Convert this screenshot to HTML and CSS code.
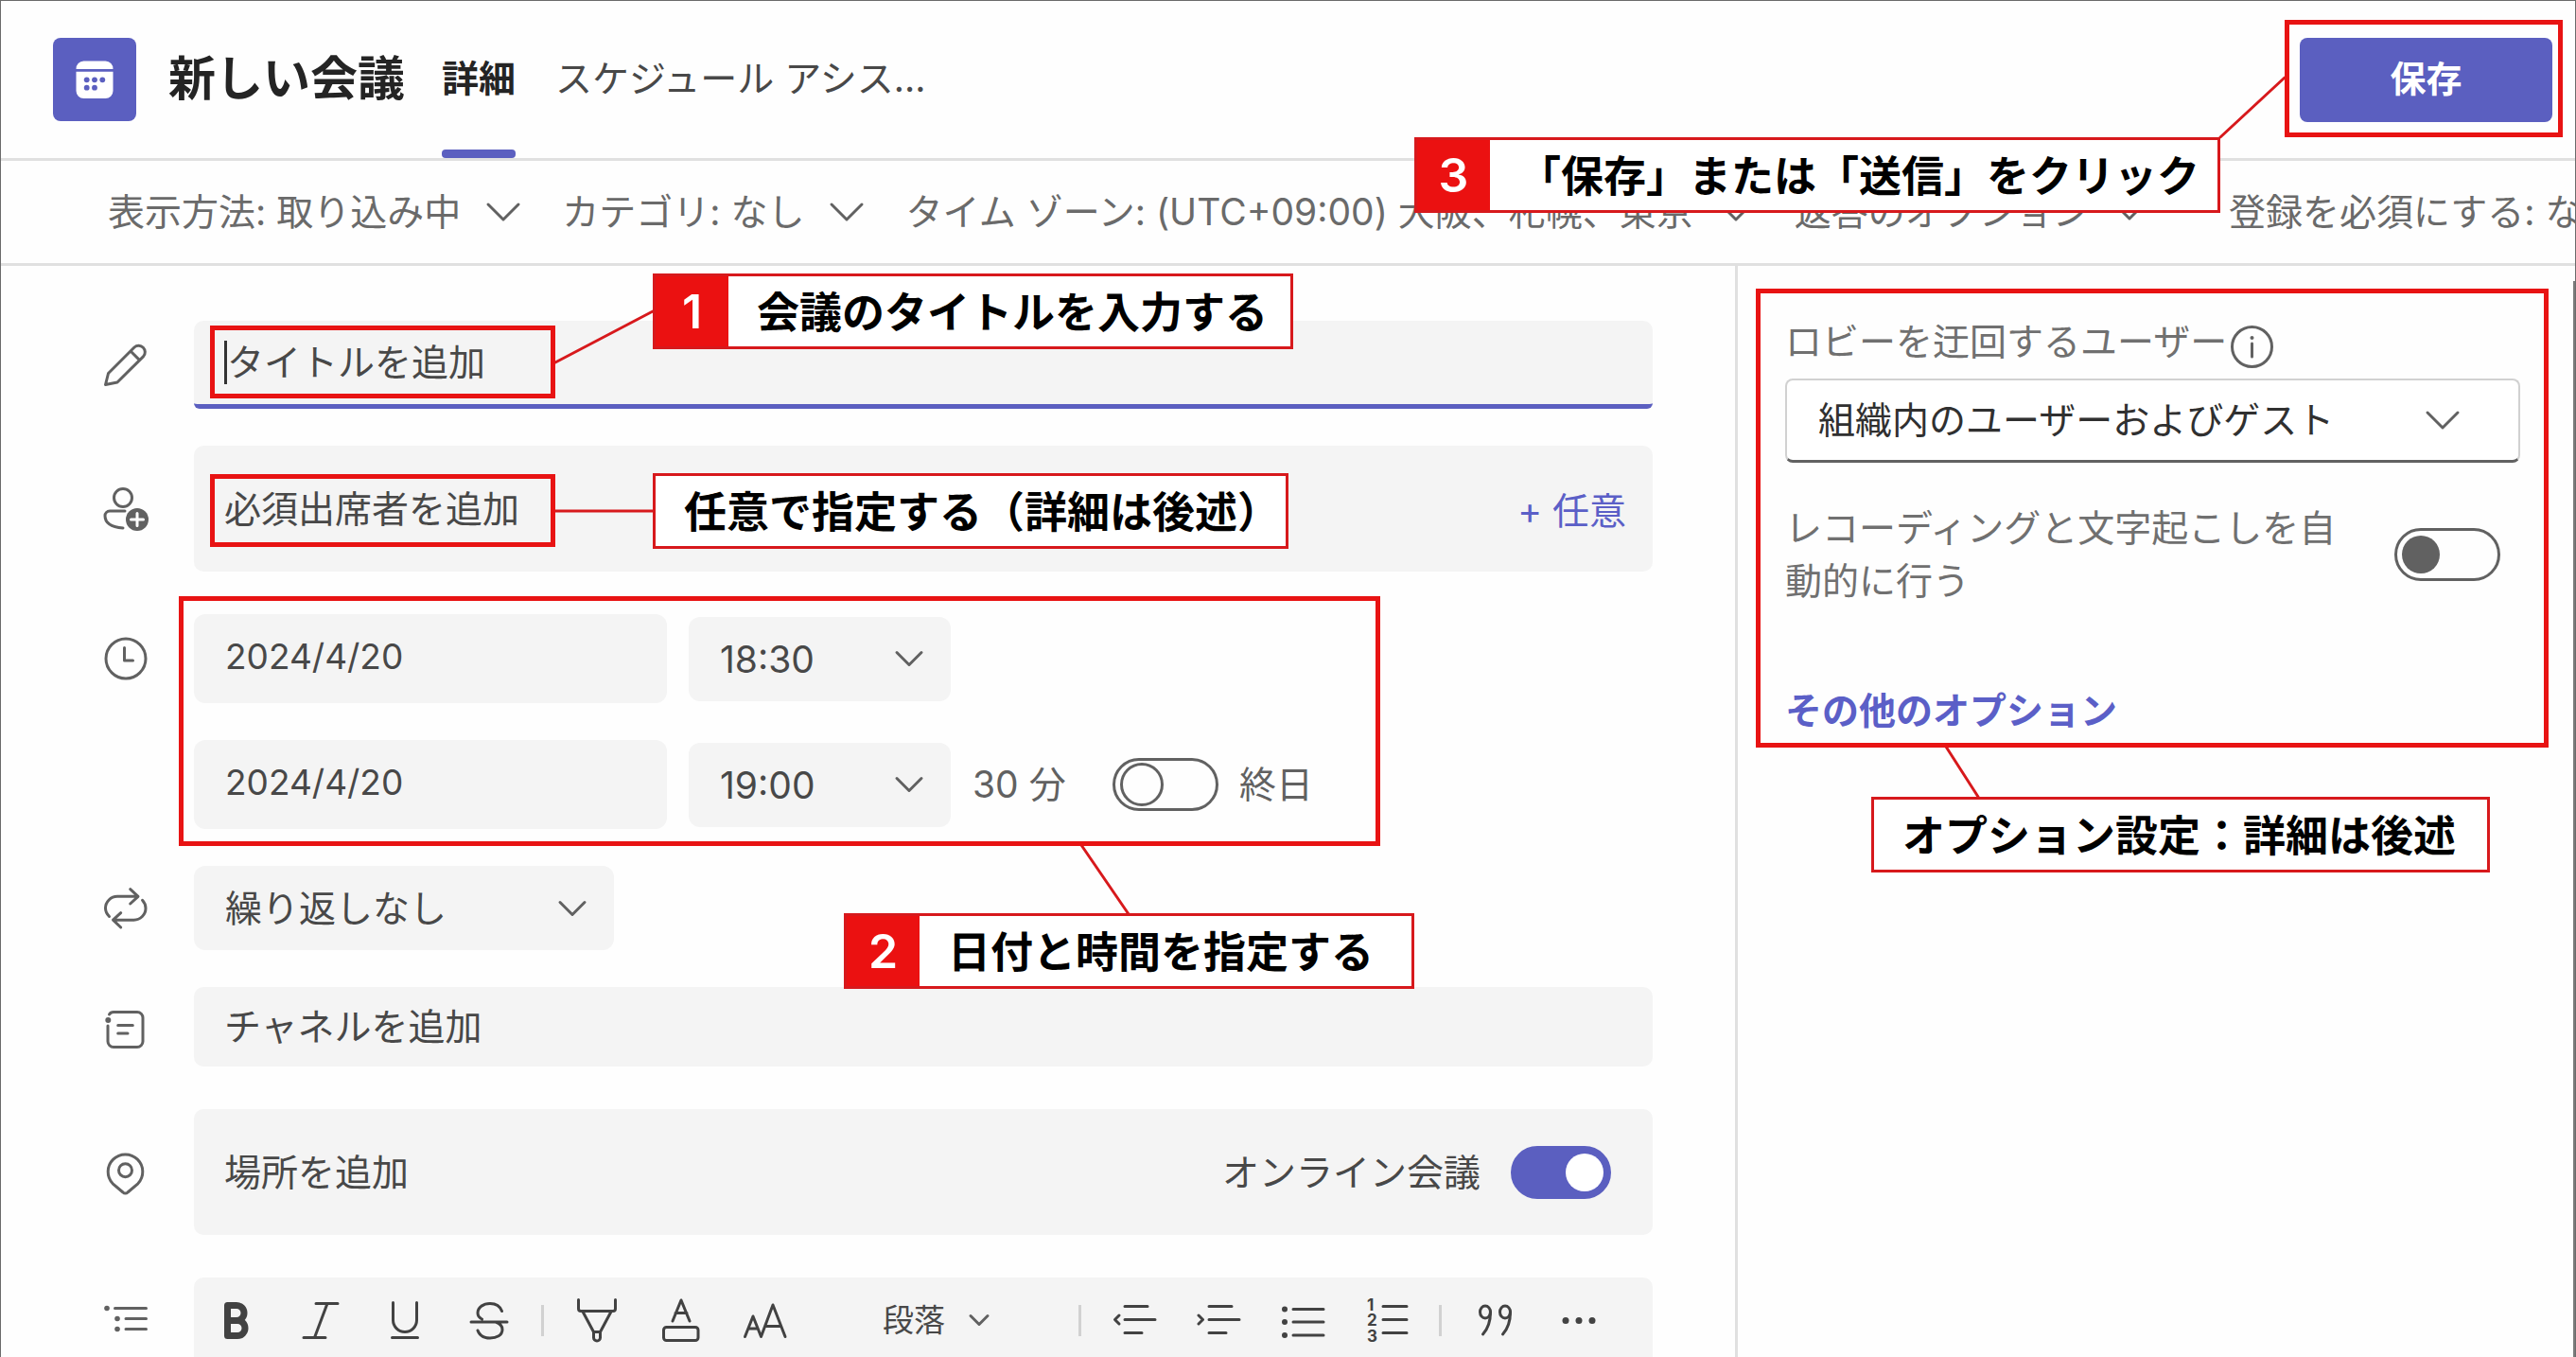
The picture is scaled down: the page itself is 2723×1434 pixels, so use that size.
FILE: index.html
```html
<!DOCTYPE html>
<html lang="ja">
<head>
    <meta charset="UTF-8">
    <meta name="viewport" content="width=device-width, initial-scale=1.0">
    <title>新しい会議</title>
    <link rel="stylesheet" href="styles.css">
</head>
<body>

    <header class="header">
        <svg class="logo" viewBox="0 0 88 88">
            <rect width="88" height="88" rx="8" fill="#5b5fc0"/>
            <path d="M24.500 33a8 8 0 0 1 8-8.500h23a8 8 0 0 1 8 8.500zM24.500 35.800h39V56a8 8 0 0 1-8 8h-23a8 8 0 0 1-8-8z" fill="#fff"/>
            <g fill="#5b5fc0">
                <circle cx="35.700" cy="44.300" r="2.900"/><circle cx="44" cy="44.300" r="2.900"/><circle cx="52.300" cy="44.300" r="2.900"/>
                <circle cx="35.700" cy="52.700" r="2.900"/><circle cx="44" cy="52.700" r="2.900"/>
            </g>
        </svg>
        <h1>新しい会議</h1>
        <nav class="tabs">
            <a href="#" class="tab active">詳細</a>
            <a href="#" class="tab">スケジュール アシス...</a>
        </nav>
        <button class="save">保存</button>
    </header>

    <div class="options-bar">
        <button>表示方法: 取り込み中 <svg class="chevron wide" viewBox="0 0 36 20"><path d="M2 2l16 16L34 2"/></svg></button>
        <button>カテゴリ: なし <svg class="chevron wide" viewBox="0 0 36 20"><path d="M2 2l16 16L34 2"/></svg></button>
        <button>タイム ゾーン: (UTC+09:00) 大阪、札幌、東京 <svg class="chevron wide" viewBox="0 0 36 20"><path d="M2 2l16 16L34 2"/></svg></button>
        <button>返答のオプション <svg class="chevron" viewBox="0 0 30 17"><path d="M2 2l13 13L28 2"/></svg></button>
        <button class="register">登録を必須にする: なし</button>
    </div>

    <main class="content">
        <form class="form">
            <!-- タイトル -->
            <div class="row">
                <svg class="icon" viewBox="0 0 48 48"><path d="M2.500 44.500L5.500 32.500 33 5a6.800 6.800 0 0 1 9.600 9.600L15 42zM29 9l9.600 9.600"/></svg>
                <div class="field title-field">
                    <span class="caret"></span>
                    <input type="text" aria-label="タイトル" placeholder="タイトルを追加">
                </div>
            </div>

            <!-- 出席者 -->
            <div class="row">
                <svg class="icon" viewBox="0 0 48 48">
                    <circle cx="21" cy="12" r="9.500"/>
                    <path d="M23 26H7a5 5 0 0 0-5 5c0 7 6 12 19 13"/>
                    <circle cx="36" cy="35" r="12" class="solid"/>
                    <path d="M36 28.500v13M29.500 35h13" class="plus"/>
                </svg>
                <div class="field tall people">
                    <input type="text" aria-label="必須出席者" placeholder="必須出席者を追加">
                    <button type="button" class="optional">+ 任意</button>
                </div>
            </div>

            <!-- 日時 -->
            <div class="row spaced">
                <svg class="icon" viewBox="0 0 48 48"><circle cx="24" cy="24" r="21"/><path d="M22.500 12.500V26h9"/></svg>
                <div class="date-line">
                    <input type="text" class="date" aria-label="開始日" value="2024/4/20">
                    <div class="select time">
                        <select aria-label="開始時刻"><option>18:30</option></select>
                        <svg class="chevron" viewBox="0 0 30 17"><path d="M2 2l13 13L28 2"/></svg>
                    </div>
                </div>
            </div>
            <div class="row">
                <span class="icon"></span>
                <div class="date-line">
                    <input type="text" class="date" aria-label="終了日" value="2024/4/20">
                    <div class="select time">
                        <select aria-label="終了時刻"><option>19:00</option></select>
                        <svg class="chevron" viewBox="0 0 30 17"><path d="M2 2l13 13L28 2"/></svg>
                    </div>
                    <span class="duration">30 分</span>
                    <input type="checkbox" class="toggle hollow" id="allday">
                    <label for="allday">終日</label>
                </div>
            </div>

            <!-- 繰り返し -->
            <div class="row">
                <svg class="icon" viewBox="0 0 48 48"><path d="M6.500 32.500C3.500 29.500 2.500 27 2.500 23.800A12.500 12.500 0 0 1 15 11.300h21M28.700 3.700l8.300 7.600-8.300 7.700M41.500 15.300C44 18 45 20.500 45 23.700a12.500 12.500 0 0 1-12.500 12.500H11M18.700 28.700L10.500 36.200l8.200 7.800"/></svg>
                <div class="select repeat">
                    <select aria-label="繰り返し"><option>繰り返しなし</option></select>
                    <svg class="chevron" viewBox="0 0 30 17"><path d="M2 2l13 13L28 2"/></svg>
                </div>
            </div>

            <!-- チャネル -->
            <div class="row">
                <svg class="icon" viewBox="0 0 48 48">
                    <path d="M6.500 11c1-1.700 2.500-2.500 4.500-2.500h25a6 6 0 0 1 6 6v25a6 6 0 0 1-6 6H11a6 6 0 0 1-6-6V23M15.700 22.500h15.600M15.700 31H26"/>
                    <circle cx="5.300" cy="17" r="3" class="solid"/>
                </svg>
                <div class="field channel">
                    <input type="text" aria-label="チャネル" placeholder="チャネルを追加">
                </div>
            </div>

            <!-- 場所 -->
            <div class="row spaced">
                <svg class="icon" viewBox="0 0 48 48"><path d="M10.200 35.800a18.300 18.300 0 1 1 26.600 0L26 45a3.500 3.500 0 0 1-5 0z"/><circle cx="23.500" cy="21.700" r="7"/></svg>
                <div class="field tall">
                    <input type="text" aria-label="場所" placeholder="場所を追加">
                    <label for="online">オンライン会議</label>
                    <input type="checkbox" class="toggle on" id="online" checked>
                </div>
            </div>

            <!-- 本文エディター -->
            <div class="row spaced editor-row">
                <svg class="icon" viewBox="0 0 48 48">
                    <path d="M12.500 12.500h33M24 23.500h21.500M24 34.500h21.500"/>
                    <g class="solid"><circle cx="4" cy="12.500" r="2.800"/><circle cx="15" cy="23.500" r="2.800"/><circle cx="15" cy="34.500" r="2.800"/></g>
                </svg>
                <div class="editor">
                    <div class="editor-tools">
                        <button type="button" aria-label="太字"><svg viewBox="0 0 48 48"><path d="M14.500 8.500h9.500a8 8 0 0 1 0 16h-9.500zM14.500 24.500H25a8 8 0 0 1 0 16H14.500z" stroke-width="7"/></svg></button>
                        <button type="button" aria-label="斜体"><svg viewBox="0 0 48 48"><path d="M19 6.500h23M6 42.500h23M31 6.500L17.500 42.500"/></svg></button>
                        <button type="button" aria-label="下線"><svg viewBox="0 0 48 48"><path d="M11.500 5.500V24a12.500 12.500 0 0 0 25 0V5.500M10.500 42.500h27"/></svg></button>
                        <button type="button" aria-label="取り消し線"><svg viewBox="0 0 48 48"><path d="M37.500 14.500c-2-5.500-7-8-12.500-8-7 0-13 4-13 10 0 3 1.500 5 4.500 6.500M5 26h38M31 26c4.500 1.500 7 4 7 8 0 6-6 9-13 9-6 0-11-2.500-13-8"/></svg></button>
                        <span class="divider"></span>
                        <button type="button" aria-label="蛍光ペン"><svg viewBox="0 0 48 48"><path d="M4.500 2.500v9.500a2.500 2.500 0 0 0 2.500 2.500h34a2.500 2.500 0 0 0 2.500-2.500V2.500M9 15l11.500 21.500h7L39 15M20.500 37v5.500a3.500 3.500 0 0 0 7 0V37"/></svg></button>
                        <button type="button" aria-label="文字の色"><svg viewBox="0 0 48 48"><path d="M15 25l9-22 9 22M18 16.500h12"/><rect x="5.500" y="31.500" width="36.500" height="14" rx="3"/></svg></button>
                        <button type="button" aria-label="文字サイズ"><svg viewBox="0 0 48 48"><path d="M2.500 41.500L11 20l8.500 21.500L32 8l13 33.500M6.500 33h9.500M23.500 30.500h17"/></svg></button>
                        <div class="select paragraph">
                            <select aria-label="段落"><option>段落</option></select>
                            <svg class="chevron small" viewBox="0 0 22 13"><path d="M2 2l9 9 9-9"/></svg>
                        </div>
                        <span class="divider"></span>
                        <button type="button" aria-label="インデント解除"><svg viewBox="0 0 48 48"><path d="M14 9.500h24M14 23.500h32M14 37.500h18M8 19l-4.500 4.500L8 28"/></svg></button>
                        <button type="button" aria-label="インデント"><svg viewBox="0 0 48 48"><path d="M14 9.500h24M14 23.500h32M14 37.500h18M3 19l4.500 4.500L3 28"/></svg></button>
                        <button type="button" aria-label="箇条書き"><svg viewBox="0 0 48 48"><path d="M14 12.500h32M14 26h32M14 40h32"/><g class="solid"><circle cx="5" cy="12.500" r="3"/><circle cx="5" cy="26" r="3"/><circle cx="5" cy="40" r="3"/></g></svg></button>
                        <button type="button" aria-label="段落番号"><svg viewBox="0 0 48 48"><path d="M20 9.500h25M20 23.500h25M20 37.500h25"/><g class="numbers"><text x="3" y="14">1</text><text x="3" y="30">2</text><text x="3" y="47">3</text></g></svg></button>
                        <span class="divider"></span>
                        <button type="button" aria-label="引用"><svg viewBox="0 0 48 48"><ellipse cx="14" cy="15.500" rx="5.500" ry="6.500"/><path d="M19.500 15.500C19.500 26 17 33 11.500 39"/><ellipse cx="35" cy="15.500" rx="5.500" ry="6.500"/><path d="M40.500 15.500C40.500 26 38 33 32.500 39"/></svg></button>
                        <button type="button" aria-label="その他"><svg viewBox="0 0 48 48"><g class="solid"><circle cx="10" cy="24.500" r="3.500"/><circle cx="24" cy="24.500" r="3.500"/><circle cx="38" cy="24.500" r="3.500"/></g></svg></button>
                    </div>
                </div>
            </div>
        </form>

        <aside class="side">
            <div class="lobby-label">
                <label for="lobby">ロビーを迂回するユーザー</label>
                <svg class="info" viewBox="0 0 45 45"><circle cx="22.500" cy="22.500" r="21"/><path d="M22.500 19v14"/><circle cx="22.500" cy="13" r="2" class="solid"/></svg>
            </div>
            <div class="select lobby">
                <select id="lobby"><option>組織内のユーザーおよびゲスト</option></select>
                <svg class="chevron wide" viewBox="0 0 36 20"><path d="M2 2l16 16L34 2"/></svg>
            </div>
            <div class="record">
                <label for="record">レコーディングと文字起こしを自動的に行う</label>
                <input type="checkbox" class="toggle filled" id="record">
            </div>
            <a href="#" class="more-options">その他のオプション</a>
        </aside>
        <span class="scrollbar"></span>
    </main>

    <!-- 説明用の枠と吹き出し -->
    <svg class="connectors">
        <path d="M587 383L690 329M587 540h103M1143 893l50 73M2347 145l68-63M2057 789l34 53"/>
    </svg>
    <div class="mark mark-title"></div>
    <div class="mark mark-people"></div>
    <div class="mark mark-date"></div>
    <div class="mark mark-save"></div>
    <div class="mark mark-options"></div>

    <div class="callout callout-title"><b>1</b><p>会議のタイトルを入力する</p></div>
    <div class="callout callout-people"><p>任意で指定する（詳細は後述）</p></div>
    <div class="callout callout-date"><b>2</b><p>日付と時間を指定する</p></div>
    <div class="callout callout-save"><b>3</b><p>「保存」または「送信」をクリック</p></div>
    <div class="callout callout-options"><p>オプション設定：詳細は後述</p></div>

</body>
</html>
```
FILE: styles.css
```css
/* Base */
* {
    box-sizing: border-box;
}
body {
    margin: 0;
    height: 100vh;
    overflow: hidden;
    display: flex;
    flex-direction: column;
    border: 1px solid #6b6b6b;
    border-bottom: none;
    background-color: #fefefe;
    color: #484848;
    font-family: Inter, "Noto Sans CJK JP", sans-serif;
    font-size: 39px;
    line-height: 56px;
}
button, input, select {
    font: inherit;
    color: inherit;
    margin: 0;
    padding: 0;
    border: none;
    background: none;
    outline: none;
}
input::placeholder {
    color: #484848;
    opacity: 1;
}
svg {
    display: block;
    flex-shrink: 0;
    overflow: visible;
    fill: none;
    stroke: #616161;
    stroke-width: 3;
    stroke-linecap: round;
    stroke-linejoin: round;
}
.solid {
    fill: #616161;
    stroke: none;
}

/* Header */
.header {
    display: flex;
    align-items: center;
    height: 166px;
    flex-shrink: 0;
    padding: 0 24px 0 55px;
}
.logo {
    width: 88px;
    height: 88px;
    stroke: none;
}
.header h1 {
    margin: 0 39px 0 34px;
    padding-bottom: 2px;
    font-size: 50px;
    color: #242424;
}
.tabs {
    display: flex;
    align-self: stretch;
    gap: 42px;
}
.tab {
    display: flex;
    align-items: center;
    padding-top: 6px;
    border-bottom: 9px solid transparent;
    color: #484848;
    text-decoration: none;
}
.tab.active {
    color: #242424;
    font-weight: bold;
    position: relative;
}
.tab.active::after {
    content: "";
    position: absolute;
    left: 0;
    right: 0;
    bottom: -9px;
    height: 9px;
    border-radius: 4px;
    background-color: #5b5fc0;
}
.save {
    width: 267px;
    height: 89px;
    margin-left: auto;
    padding-bottom: 2px;
    border-radius: 8px;
    background-color: #5b5fc0;
    color: #fff;
    font-size: 38px;
    font-weight: bold;
}

/* Options bar */
.options-bar {
    display: flex;
    align-items: center;
    gap: 44px;
    height: 114px;
    flex-shrink: 0;
    padding-left: 113px;
    border-top: 3px solid #e0e0e0;
    border-bottom: 3px solid #e0e0e0;
    color: #6a6a6a;
    white-space: nowrap;
    overflow: hidden;
}
.options-bar button {
    display: flex;
    align-items: center;
    flex-shrink: 0;
    gap: 27px;
}
.options-bar .register {
    margin-left: 46px;
}
.chevron {
    width: 30px;
    height: 17px;
}
.chevron.wide {
    width: 36px;
    height: 20px;
}
.chevron.small {
    width: 22px;
    height: 13px;
}

/* Content */
.content {
    display: flex;
    flex: 1;
    min-height: 0;
    position: relative;
}
.form {
    display: flex;
    flex-direction: column;
    flex: 1;
    gap: 39px;
    padding: 58px 87px 0 108px;
}
.row {
    display: flex;
    align-items: center;
    gap: 48px;
}
.row.spaced {
    margin-top: 6px;
}
.icon {
    width: 48px;
    height: 48px;
    flex-shrink: 0;
}
.plus {
    stroke: #fff;
}
.field {
    display: flex;
    align-items: center;
    flex: 1;
    padding: 0 32px;
    border-radius: 10px;
    background-color: #f4f4f4;
}
.field input[type="text"] {
    flex: 1;
    min-width: 0;
}
.title-field {
    height: 93px;
    border-bottom: 5px solid #5b5fc0;
    border-radius: 10px 10px 6px 6px;
}
.caret {
    width: 3px;
    height: 46px;
    background-color: #333;
}
.tall {
    height: 133px;
}
.people {
    padding-right: 28px;
}
.channel {
    height: 84px;
}
.optional {
    padding-top: 4px;
    color: #5b5fc7;
}

/* Date and time */
.date-line {
    display: flex;
    align-items: center;
}
.date {
    width: 500px;
    height: 94px;
    margin-right: 23px;
    padding: 0 33px 6px;
    border-radius: 12px;
    background-color: #f4f4f4;
    font-size: 37px;
}
.duration {
    width: 148px;
    margin-left: 23px;
    color: #616161;
}
.date-line label {
    margin-left: 22px;
    color: #616161;
}

/* Selects */
.select {
    position: relative;
    display: flex;
    height: 89px;
    border-radius: 12px;
    background-color: #f4f4f4;
}
.select select {
    appearance: none;
    width: 100%;
    padding: 0 33px;
}
.select .chevron {
    position: absolute;
    right: 29px;
    top: 50%;
    transform: translateY(-50%);
    pointer-events: none;
}
.time {
    width: 277px;
}
.time select {
    padding-top: 2px;
}
.repeat {
    width: 444px;
}

/* Toggles */
.toggle {
    appearance: none;
    display: flex;
    align-items: center;
    flex-shrink: 0;
    width: 112px;
    height: 56px;
    padding: 0 5px;
    border: 3px solid #616161;
    border-radius: 28px;
}
.toggle::before {
    content: "";
    width: 40px;
    height: 40px;
    border-radius: 50%;
}
.toggle.hollow::before {
    border: 3px solid #616161;
}
.toggle.filled::before {
    background-color: #616161;
}
.toggle.on {
    justify-content: flex-end;
    width: 106px;
    margin: 0 12px 0 32px;
    border-color: #5b5fc0;
    background-color: #5b5fc0;
}
.toggle.on::before {
    background-color: #fff;
}

/* Editor */
.editor-row {
    flex: 1;
    align-items: stretch;
}
.editor-row .icon {
    margin-top: 20px;
}
.editor {
    flex: 1;
    border-radius: 10px 10px 0 0;
    background-color: #f4f4f4;
}
.editor-tools {
    display: flex;
    align-items: center;
    height: 90px;
}
.editor-tools button {
    display: flex;
    justify-content: center;
    width: 89px;
}
.editor-tools button svg {
    width: 48px;
    height: 48px;
    stroke: #424242;
}
.editor-tools .solid {
    fill: #424242;
}
.numbers {
    fill: #424242;
    stroke: none;
    font-size: 17px;
    font-weight: bold;
}
.divider {
    width: 3px;
    height: 33px;
    margin: 0 11px;
    background-color: #d1d1d1;
}
.paragraph {
    width: 276px;
    font-size: 33px;
}
.paragraph select {
    padding: 0 0 0 80px;
}
.paragraph .chevron {
    right: 83px;
}

/* Side panel */
.side {
    width: 888px;
    padding: 52px 58px 0 50px;
    border-left: 3px solid #e0e0e0;
    color: #707070;
}
.lobby-label {
    display: flex;
    align-items: flex-end;
    gap: 4px;
}
.info {
    width: 45px;
    height: 45px;
}
.lobby {
    margin-top: 11px;
    border: 2px solid #d1d1d1;
    border-bottom: 3px solid #616161;
    border-radius: 8px;
    background-color: #fff;
    color: #303030;
}
.lobby .chevron {
    right: 62px;
}
.record {
    display: flex;
    align-items: center;
    justify-content: space-between;
    margin: 41px 21px 81px 0;
}
.record label {
    width: 600px;
}
.more-options {
    color: #5b5fc7;
    font-weight: bold;
    text-decoration: none;
}
.scrollbar {
    position: absolute;
    top: 16px;
    right: 0;
    bottom: 0;
    width: 2px;
    background-color: #7a7a7a;
}

/* Annotations */
.connectors {
    position: absolute;
    top: 0;
    left: 0;
    width: 100%;
    height: 100%;
    stroke: #d7191c;
    pointer-events: none;
}
.mark {
    position: absolute;
    border: 5px solid #e81313;
    pointer-events: none;
}
.mark-title { left: 222px; top: 344px; width: 365px; height: 77px; }
.mark-people { left: 222px; top: 501px; width: 365px; height: 77px; }
.mark-date { left: 189px; top: 630px; width: 1270px; height: 264px; }
.mark-save { left: 2415px; top: 21px; width: 294px; height: 124px; }
.mark-options { left: 1856px; top: 305px; width: 838px; height: 485px; }
.callout {
    position: absolute;
    display: flex;
    align-items: center;
    height: 80px;
    border: 3px solid #d7191c;
    background-color: #fff;
    color: #000;
    font-size: 45px;
    font-weight: bold;
    white-space: nowrap;
}
.callout b {
    align-self: stretch;
    display: flex;
    align-items: center;
    justify-content: center;
    width: 77px;
    background-color: #eb1111;
    color: #fff;
    font-size: 50px;
    font-weight: 600;
}
.callout p {
    margin: 0;
    padding: 3px 0 0 30px;
}
.callout-title { left: 690px; top: 289px; width: 677px; }
.callout-people { left: 690px; top: 500px; width: 672px; }
.callout-date { left: 892px; top: 965px; width: 603px; }
.callout-save { left: 1495px; top: 145px; width: 852px; }
.callout-options { left: 1978px; top: 842px; width: 654px; }
```
